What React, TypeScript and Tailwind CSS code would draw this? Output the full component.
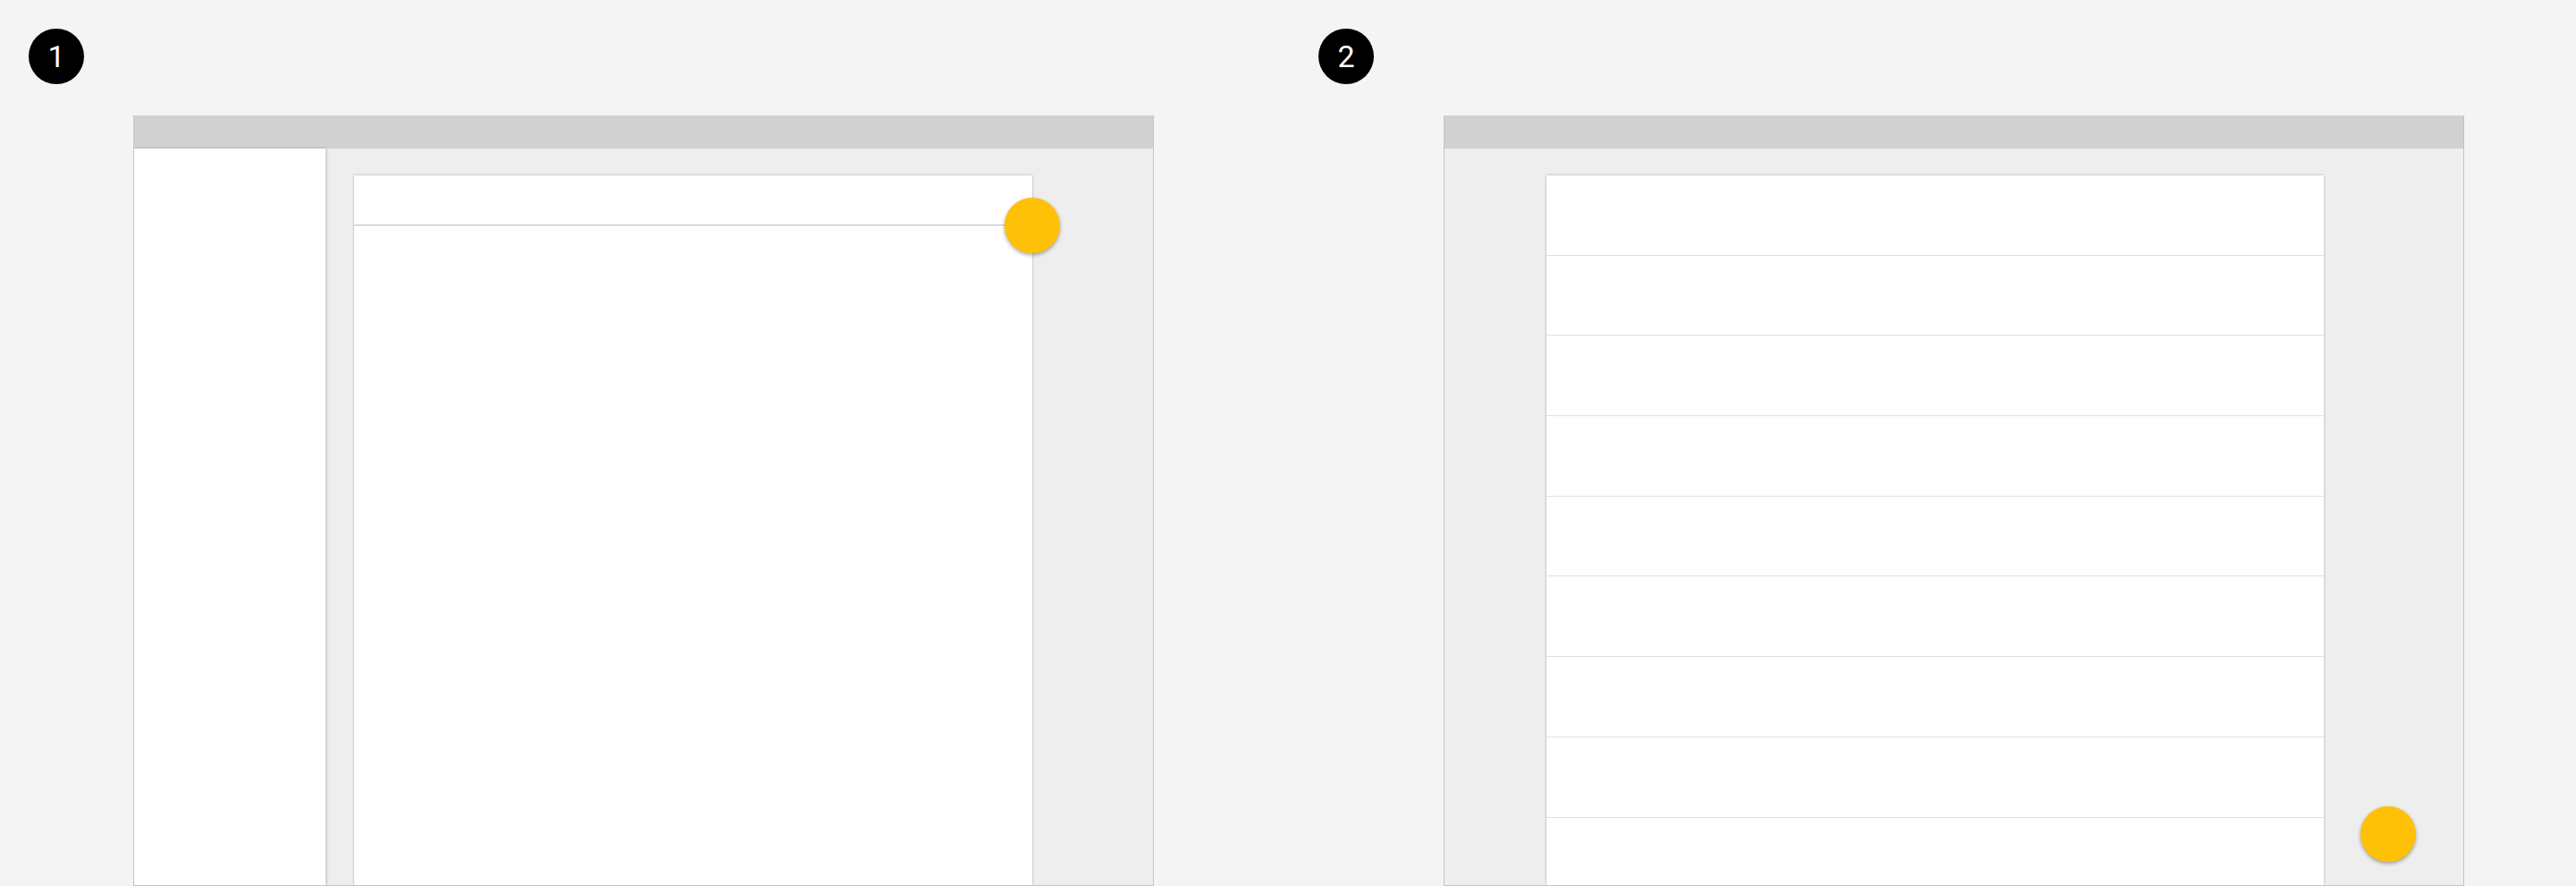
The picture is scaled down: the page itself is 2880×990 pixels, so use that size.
import React from "react";

function Badge({ n }: { n: number }) {
  return (
    <div className="flex h-[62px] w-[62px] items-center justify-center rounded-full bg-black font-['Roboto',sans-serif] text-[34px] leading-none text-white">
      {n}
    </div>
  );
}

function Fab({ className }: { className: string }) {
  return (
    <div
      className={
        "absolute h-[62px] w-[62px] rounded-full bg-[#ffc107] shadow-[0_2px_4px_rgba(0,0,0,0.35)] " +
        className
      }
    />
  );
}

function Frame({ children }: { children: React.ReactNode }) {
  return (
    <div className="relative mt-[35px] flex h-[861px] w-[1141px] flex-col overflow-hidden border-x border-b border-[#c4c4c4] bg-[#eeeeee]">
      <div className="h-[37px] shrink-0 bg-[#d1d1d1]" />
      <div className="relative flex min-h-0 flex-1">{children}</div>
    </div>
  );
}

// layout 1: side nav + single card with a header row, FAB on the header edge
function LayoutOne() {
  return (
    <Frame>
      <div className="w-[214px] shrink-0 bg-white shadow-[1px_0_3px_rgba(0,0,0,0.22)]" />
      <div className="relative ml-[32px] mt-[30px] w-[758px] bg-white shadow-[0_0_3px_rgba(0,0,0,0.25)]">
        <div className="h-[56px] border-b border-[#bdbdbd]" />
      </div>
      <Fab className="left-[973px] top-[55px]" />
    </Frame>
  );
}

// layout 2: list card of rows, FAB bottom right
function LayoutTwo() {
  const rows = Array.from({ length: 9 });
  return (
    <Frame>
      <div className="ml-[114px] mt-[30px] w-[869px] bg-white shadow-[0_0_3px_rgba(0,0,0,0.25)]">
        {rows.map((_, i) => (
          <div key={i} className="h-[89.7px] border-b border-[#e0e0e0]" />
        ))}
      </div>
      <Fab className="left-[1024px] top-[735px]" />
    </Frame>
  );
}

export default function App() {
  return (
    <div className="flex h-[990px] w-[2880px] overflow-hidden bg-[#f4f4f4]">
      <div className="w-[1442px] shrink-0 pl-[32px] pt-[32px]">
        <Badge n={1} />
        <div className="ml-[117px]">
          <LayoutOne />
        </div>
      </div>
      <div className="w-[1438px] shrink-0 pl-[32px] pt-[32px]">
        <Badge n={2} />
        <div className="ml-[140px]">
          <LayoutTwo />
        </div>
      </div>
    </div>
  );
}
